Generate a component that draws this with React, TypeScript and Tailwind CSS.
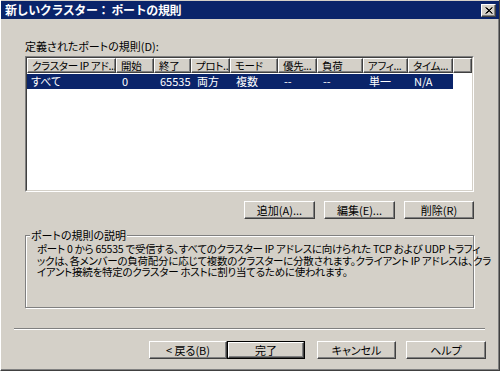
import React from "react";

const cols: { label: string; w: number; val: string }[] = [
  { label: "クラスター IP アド...", w: 89, val: "すべて" },
  { label: "開始", w: 38, val: "0" },
  { label: "終了", w: 37, val: "65535" },
  { label: "プロト...", w: 39, val: "両方" },
  { label: "モード", w: 48, val: "複数" },
  { label: "優先...", w: 39, val: "--" },
  { label: "負荷", w: 46, val: "--" },
  { label: "アフィ...", w: 45, val: "単一" },
  { label: "タイム...", w: 45, val: "N/A" },
];

function Btn({ children, w, def }: { children: React.ReactNode; w: number; def?: boolean }) {
  return (
    <div
      className={
        def
          ? "h-[18px] border border-black flex"
          : "h-[18px] flex"
      }
      style={{ width: w }}
    >
      <div className="flex-1 flex items-center justify-center border-t border-l border-t-white border-l-white border-r border-b border-r-[#404040] border-b-[#404040] shadow-[inset_-1px_-1px_0_#808080] text-[11px] leading-none text-black whitespace-pre">
        {children}
      </div>
    </div>
  );
}

export default function App() {
  return (
    <div className="w-[500px] h-[371px] bg-[#d4d0c8] flex flex-col border-l border-l-white border-r border-b border-r-[#404040] border-b-[#404040] shadow-[inset_-1px_-1px_0_#808080] overflow-hidden font-['Noto_Sans_CJK_JP',sans-serif] [font-feature-settings:'palt'] text-black">
      <div className="h-[1px] bg-[#d4d0c8] shrink-0" />
      <div className="h-[18px] bg-[#0a246a] flex items-center justify-between pl-[4px] pr-[3px] shrink-0">
        <span className="text-white font-bold text-[12px] leading-none [font-feature-settings:normal] tracking-[-0.4px]">新しいクラスター： ポートの規則</span>
        <div className="w-[15px] h-[13px] bg-[#d4d0c8] border-t border-l border-t-white border-l-white border-r border-b border-r-[#404040] border-b-[#404040] shadow-[inset_-1px_-1px_0_#808080] flex items-center justify-center">
          <svg width="8" height="7" viewBox="0 0 8 7">
            <path d="M0.5 0.5 L7 6.5 M1.5 0.5 L7.5 6.5 M7 0.5 L0.5 6.5 M7.5 0.5 L1.5 6.5" stroke="black" strokeWidth="1" />
          </svg>
        </div>
      </div>

      <div className="pl-[24px] flex flex-col">
        <div className="mt-[21px] h-[12px] text-[11px] leading-[12px]">定義されたポートの規則(D):</div>

        <div className="mt-[4px] w-[449px] h-[136px] border border-t-[#808080] border-l-[#808080] border-r-white border-b-white">
          <div className="w-full h-full border border-t-[#404040] border-l-[#404040] border-r-[#d4d0c8] border-b-[#d4d0c8] bg-white flex flex-col overflow-hidden">
            <div className="flex h-[15px] shrink-0">
              {cols.map((c) => (
                <div
                  key={c.label}
                  className="h-[15px] bg-[#d4d0c8] border-t border-l border-t-white border-l-white border-r border-b border-r-[#404040] border-b-[#404040] shadow-[inset_-1px_-1px_0_#808080] text-[10.5px] tracking-[-0.3px] leading-[13px] pl-[4px] whitespace-pre overflow-hidden shrink-0"
                  style={{ width: c.w }}
                >
                  {c.label}
                </div>
              ))}
              <div className="flex-1 h-[15px] bg-[#d4d0c8] border-t border-l border-t-white border-l-white border-r border-b border-r-[#404040] border-b-[#404040] shadow-[inset_-1px_-1px_0_#808080]" />
            </div>
            <div className="flex h-[15px] shrink-0 mt-[1px]">
              <div className="flex bg-[#0a246a] text-white">
                {cols.map((c, i) => (
                  <div
                    key={i}
                    className="h-[15px] text-[11px] leading-[15px] whitespace-nowrap overflow-hidden shrink-0"
                    style={{ width: c.w, paddingLeft: i === 0 ? 4 : 6 }}
                  >
                    {c.val}
                  </div>
                ))}
              </div>
            </div>
          </div>
        </div>

        <div className="mt-[9px] w-[449px] flex justify-end gap-[9px]">
          <Btn w={71}>追加(A)...</Btn>
          <Btn w={71}>編集(E)...</Btn>
          <Btn w={70}>削除(R)</Btn>
        </div>

        <div className="mt-[16px] w-[449px] h-[73px] border border-[#808080] shadow-[inset_1px_1px_0_white,1px_1px_0_white] relative">
          <span className="absolute left-[4px] -top-[7px] bg-[#d4d0c8] px-[1px] text-[11px] leading-[12px]">ポートの規則の説明</span>
          <div className="pt-[7px] pl-[11px] text-[10.5px] tracking-[-0.25px] leading-[11.5px] whitespace-pre">
            <div>ポート 0 から 65535 で受信する、すべてのクラスター IP アドレスに向けられた TCP および UDP トラフィ</div>
            <div>ックは、各メンバーの負荷配分に応じて複数のクラスターに分散されます。クライアント IP アドレスは、クラ</div>
            <div>イアント接続を特定のクラスター ホストに割り当てるために使われます。</div>
          </div>
        </div>
      </div>

      <div className="mt-[20px] ml-[13px] w-[471px] h-[2px] border-t border-t-[#808080] border-b border-b-white" />

      <div className="mt-[11px] ml-[148px] flex">
        <Btn w={78}>{"< 戻る(B)"}</Btn>
        <Btn w={78} def>完了</Btn>
        <div className="w-[12px]" />
        <Btn w={79}>キャンセル</Btn>
        <div className="w-[10px]" />
        <Btn w={80}>ヘルプ</Btn>
      </div>
    </div>
  );
}
